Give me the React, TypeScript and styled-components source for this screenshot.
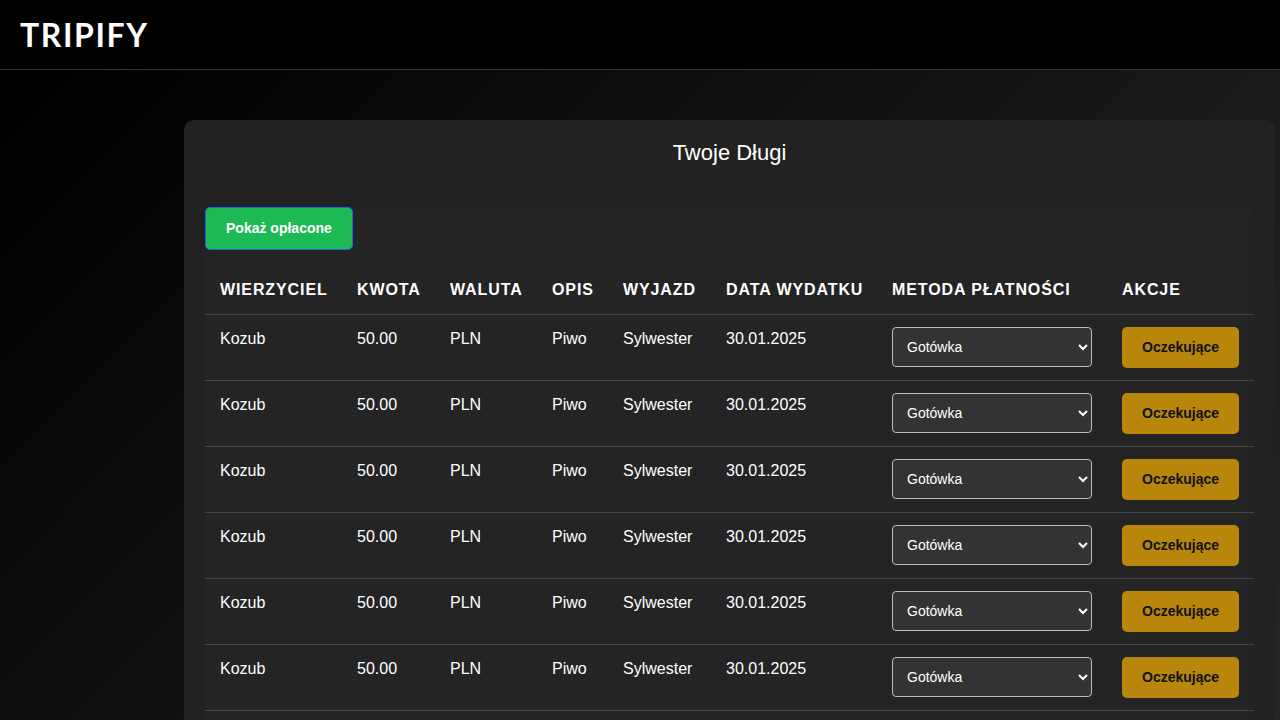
import React from "react";
import styled, { createGlobalStyle } from "styled-components";

const GlobalStyle = createGlobalStyle`
  html, body { margin: 0; padding: 0; }
  body {
    background: #000;
    font-family: "Liberation Sans", Arial, sans-serif;
    color: #fff;
  }
  * { box-sizing: border-box; }
`;

const Page = styled.div`
  min-width: 1924px;
  min-height: 100vh;
  display: flex;
  flex-direction: column;
`;

const Header = styled.header`
  height: 70px;
  background: #000;
  border-bottom: 1px solid #333;
  display: flex;
  align-items: center;
  padding: 0 20px;
`;

const Logo = styled.h1`
  margin: 0;
  font-family: Lato, "Open Sans", sans-serif;
  font-weight: 700;
  font-size: 32px;
  letter-spacing: 1.6px;
  color: #fff;
`;

const Main = styled.main`
  flex: 1;
  background: linear-gradient(135deg, #000000 0%, #434343 100%);
  padding: 50px 0 50px 184px;
`;

const Card = styled.section`
  width: 1091px;
  background: #222;
  border-radius: 10px;
  padding: 20px 21px;
`;

const Title = styled.h2`
  margin: 0 0 41px;
  text-align: center;
  font-size: 22px;
  line-height: 26px;
  font-weight: 400;
  color: #fff;
`;

const TableWrap = styled.div`
  background: #242424;
  border-radius: 6px;
`;

const ToggleButton = styled.button`
  display: block;
  margin: 0 0 14px;
  background: #1db954;
  color: #fff;
  border: 1px solid #2563eb;
  border-radius: 5px;
  padding: 12px 20px;
  font-family: "Liberation Sans", Arial, sans-serif;
  font-weight: 700;
  font-size: 14px;
  line-height: 17px;
  cursor: pointer;
`;

const Table = styled.table`
  width: 100%;
  border-collapse: collapse;
  table-layout: fixed;
`;

const Th = styled.th`
  text-align: left;
  padding: 17px 15px 15px;
  font-size: 16px;
  line-height: 18px;
  font-weight: 700;
  letter-spacing: 0.9px;
  text-transform: uppercase;
  color: #fff;
  border-bottom: 1px solid #444;
  white-space: nowrap;
`;

const Td = styled.td`
  padding: 12px 15px;
  vertical-align: top;
  font-size: 16px;
  line-height: 18px;
  color: #fff;
  border-bottom: 1px solid #444;
  white-space: nowrap;
`;

const CellText = styled.span`
  display: inline-block;
  padding-top: 3px;
`;

const Select = styled.select`
  width: 200px;
  height: 40px;
  background: #333;
  color: #fff;
  border: 1px solid #bbb;
  border-radius: 4px;
  padding: 0 10px;
  font-family: "Liberation Sans", Arial, sans-serif;
  font-size: 14px;
`;

const StatusButton = styled.button`
  background: #b8860b;
  color: #111;
  border: none;
  border-radius: 5px;
  padding: 12px 20px;
  font-family: "Liberation Sans", Arial, sans-serif;
  font-weight: 700;
  font-size: 14px;
  line-height: 17px;
  cursor: pointer;
`;

const columns = [
  { label: "Wierzyciel", width: 137 },
  { label: "Kwota", width: 93 },
  { label: "Waluta", width: 102 },
  { label: "Opis", width: 71 },
  { label: "Wyjazd", width: 103 },
  { label: "Data wydatku", width: 166 },
  { label: "Metoda płatności", width: 230 },
  { label: "Akcje", width: 147 },
];

const rows = Array.from({ length: 17 }, (_, i) => ({
  id: i,
  creditor: "Kozub",
  amount: "50.00",
  currency: "PLN",
  desc: "Piwo",
  trip: "Sylwester",
  date: "30.01.2025",
}));

export default function App() {
  return (
    <>
      <GlobalStyle />
      <Page>
        <Header>
          <Logo>TRIPIFY</Logo>
        </Header>
        <Main>
          <Card>
            <Title>Twoje Długi</Title>
            <TableWrap>
              <ToggleButton>Pokaż opłacone</ToggleButton>
              <Table>
                <colgroup>
                  {columns.map((c) => (
                    <col key={c.label} style={{ width: c.width }} />
                  ))}
                </colgroup>
                <thead>
                  <tr>
                    {columns.map((c) => (
                      <Th key={c.label}>{c.label}</Th>
                    ))}
                  </tr>
                </thead>
                <tbody>
                  {rows.map((r) => (
                    <tr key={r.id}>
                      <Td><CellText>{r.creditor}</CellText></Td>
                      <Td><CellText>{r.amount}</CellText></Td>
                      <Td><CellText>{r.currency}</CellText></Td>
                      <Td><CellText>{r.desc}</CellText></Td>
                      <Td><CellText>{r.trip}</CellText></Td>
                      <Td><CellText>{r.date}</CellText></Td>
                      <Td>
                        <Select defaultValue="cash">
                          <option value="cash">Gotówka</option>
                          <option value="card">Karta</option>
                          <option value="transfer">Przelew</option>
                        </Select>
                      </Td>
                      <Td>
                        <StatusButton>Oczekujące</StatusButton>
                      </Td>
                    </tr>
                  ))}
                </tbody>
              </Table>
            </TableWrap>
          </Card>
        </Main>
      </Page>
    </>
  );
}
